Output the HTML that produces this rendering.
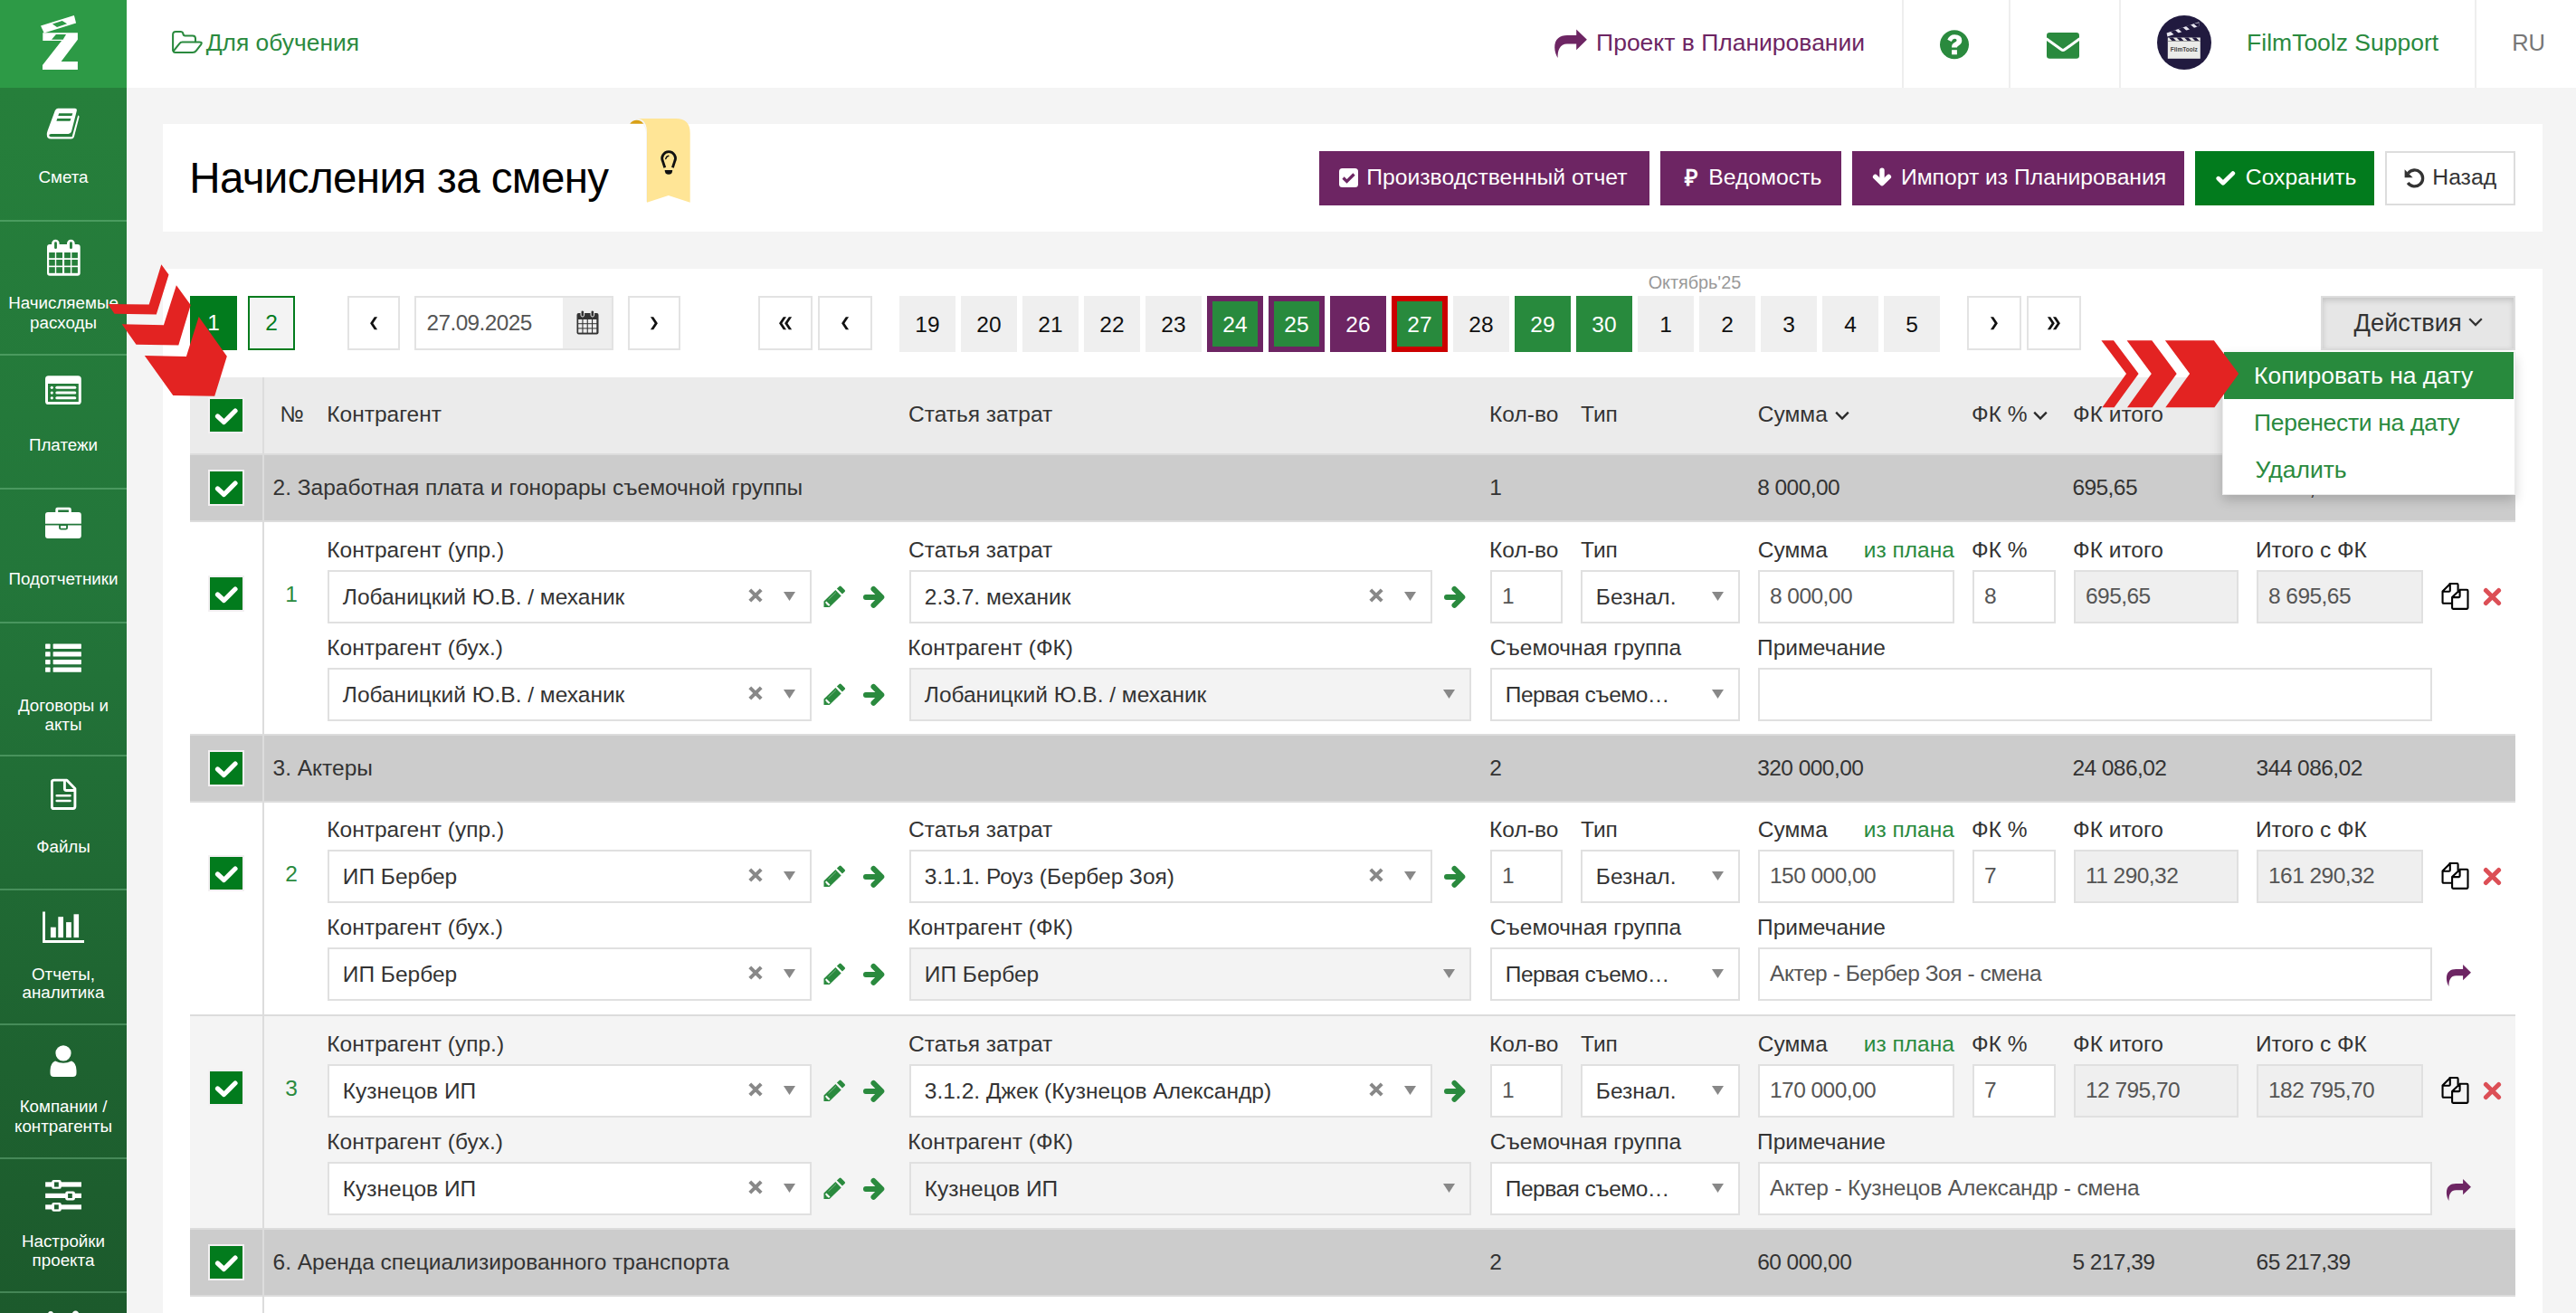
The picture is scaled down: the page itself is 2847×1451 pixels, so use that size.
<!DOCTYPE html>
<html><head><meta charset="utf-8"><title>Начисления за смену</title>
<style>
html,body{margin:0;padding:0;}
body{width:2847px;height:1451px;overflow:hidden;position:relative;background:#f4f4f4;font-family:"Liberation Sans", sans-serif;}
.t{position:absolute;white-space:nowrap;line-height:1;font-family:"Liberation Sans", sans-serif;}
.r{position:absolute;box-sizing:border-box;}
</style></head><body>

<div class="r" style="left:140px;top:0px;width:2707px;height:97px;background:#fff"></div>
<div class="r" style="left:2102px;top:0px;width:2px;height:97px;background:#eeeeee"></div>
<div class="r" style="left:2220px;top:0px;width:2px;height:97px;background:#eeeeee"></div>
<div class="r" style="left:2342px;top:0px;width:2px;height:97px;background:#eeeeee"></div>
<div class="r" style="left:2735px;top:0px;width:2px;height:97px;background:#eeeeee"></div>
<svg class="r" style="left:189px;top:33px;" width="36" height="27" viewBox="0 0 36 27"><g fill="none" stroke="#2a8a3e" stroke-width="2.05" stroke-linejoin="round" stroke-linecap="round"><path d="M2.1 23 V5.3 Q2.1 1.95 5.4 1.95 H10.6 Q12.8 1.95 13.3 4 Q13.7 6.4 15.5 6.4 H23.9 Q27 6.4 27 9.6 V13.3"/><path d="M4.8 24.9 H23.9 Q26.5 24.9 28 22.8 L33.4 15.8 Q34.8 13.4 31.1 13.4 H12.6 Q10.5 13.4 9.2 15.3 L3 23.2 Q2.1 24.9 4.8 24.9 Z"/></g></svg>
<div class="t" style="left:227.7px;top:34.1px;font-size:26.4px;color:#2a8a3e;">Для обучения</div>
<svg class="r" style="left:1717px;top:31px;" width="38" height="34" viewBox="0 0 38 34"><path d="M36.9 12.8 L25.2 1.4 V8.05 H15 C7 8.05 1.2 12 1.2 21.5 C1.2 26 3 30.5 4.65 33 C4.2 25 7 17.6 15 17.6 H25.2 V24.2 Z" fill="#6d2563"/></svg>
<div class="t" style="left:1764.1px;top:33.6px;font-size:26.5px;color:#6d2563;">Проект в Планировании</div>
<svg class="r" style="left:2144px;top:33px;" width="32" height="33" viewBox="0 0 32 33"><circle cx="16" cy="16.2" r="16" fill="#2a8a3e"/><path d="M8.3 10.8 Q10.5 5.2 16.2 5.2 Q24.3 5.2 24.3 11.8 Q24.3 15.4 20.6 17.4 Q18.9 18.4 18.9 19.6 H13.1 V18.6 Q13.1 15.4 16.5 13.8 Q18.6 12.8 18.6 11.5 Q18.6 9.8 16.3 9.8 Q14.2 9.8 12.6 12.9 Z" fill="#fff"/><rect x="13.1" y="22.2" width="5.8" height="5.1" fill="#fff"/></svg>
<svg class="r" style="left:2262px;top:36px;" width="36" height="29" viewBox="0 0 36 29"><rect x="0" y="0" width="36" height="28.7" rx="3.2" fill="#2a8a3e"/><path d="M-0.5 6.8 L16.2 18.8 Q18 20.1 19.8 18.8 L36.5 6.8" fill="none" stroke="#fff" stroke-width="3"/></svg>
<svg class="r" style="left:2384px;top:17px;" width="60" height="60" viewBox="0 0 60 60"><circle cx="30" cy="30" r="30" fill="#211a3f"/><path d="M10.6 19.4 L46.3 7.2 L47 11.8 L11.4 23.4 Z" fill="#e8e6f0"/><path d="M15 18 L19.5 22 L24.5 20.3 L20 16.3 Z M23.5 15 L28 19 L33 17.3 L28.5 13.3 Z M32 12 L36.5 16 L41.5 14.3 L37 10.3 Z M40.5 9.2 L44.5 12.8 L46.8 12 L46.5 8.2 Z" fill="#211a3f"/><rect x="11.8" y="24.5" width="36" height="23.3" fill="#ebebe9"/><path d="M13 24.5 L16.5 28 H21 L17.5 24.5 Z M21.5 24.5 L25 28 H29.5 L26 24.5 Z M30 24.5 L33.5 28 H38 L34.5 24.5 Z M38.5 24.5 L42 28 H46.5 L43 24.5 Z" fill="#211a3f"/><rect x="11.8" y="28" width="36" height="0.8" fill="#888"/><text x="29.8" y="40.3" font-size="7" font-family="Liberation Sans" font-weight="bold" text-anchor="middle" fill="#444" textLength="30" lengthAdjust="spacingAndGlyphs">FilmToolz</text></svg>
<div class="t" style="left:2483.1px;top:34.1px;font-size:26.5px;color:#2a8a3e;">FilmToolz Support</div>
<div class="t" style="left:2776.2px;top:34.9px;font-size:25.5px;color:#777777;">RU</div>
<div class="r" style="left:0px;top:0px;width:140px;height:97px;background:#2d9a46"></div>
<div class="r" style="left:0px;top:97px;width:140px;height:1354px;background:linear-gradient(180deg,#267f3b 0%,#23763a 40%,#1e6230 80%,#1c5a2c 100%)"></div>
<div class="r" style="left:0px;top:243px;width:140px;height:2px;background:rgba(140,210,160,0.36)"></div>
<div class="r" style="left:0px;top:391px;width:140px;height:2px;background:rgba(140,210,160,0.36)"></div>
<div class="r" style="left:0px;top:539px;width:140px;height:2px;background:rgba(140,210,160,0.36)"></div>
<div class="r" style="left:0px;top:687px;width:140px;height:2px;background:rgba(140,210,160,0.36)"></div>
<div class="r" style="left:0px;top:834px;width:140px;height:2px;background:rgba(140,210,160,0.36)"></div>
<div class="r" style="left:0px;top:982px;width:140px;height:2px;background:rgba(140,210,160,0.36)"></div>
<div class="r" style="left:0px;top:1131px;width:140px;height:2px;background:rgba(140,210,160,0.36)"></div>
<div class="r" style="left:0px;top:1279px;width:140px;height:2px;background:rgba(140,210,160,0.36)"></div>
<div class="r" style="left:0px;top:1427px;width:140px;height:2px;background:rgba(140,210,160,0.36)"></div>
<svg class="r" style="left:44px;top:15px;" width="46" height="64" viewBox="0 0 46 64"><path d="M1 13.6 L37.9 1.9 L40.1 10.4 L4.7 21.6 Z" fill="#fff"/><path d="M13.9 11.6 L24.7 7.9 L30.1 11.3 L19 15 Z" fill="#2d9a46"/><path d="M3.3 21.3 H41.9 V28.7 L23.6 53 H41.9 V61.9 H3 V57 L24.1 30.1 H3.3 Z" fill="#fff"/><path d="M13 28.7 L17.9 23 H29 L25.6 28.7 Z" fill="#2d9a46"/></svg>
<svg class="r" style="left:51px;top:119px;" width="38" height="36" viewBox="0 0 38 36"><path d="M13 0.7 H31.6 Q34.4 0.7 33.8 3.4 L28 26.3 Q27.3 29 24.6 29 H5.5 Q3.2 29 3.2 30.6 Q3.2 32.2 5.5 32.2 H28.6 L35.2 8.6 Q36.8 8.8 36.5 10.6 L30.9 32.2 Q30.2 34.6 27.6 34.6 H5.3 Q0.6 34.6 0.8 29.5 Q0.9 27.5 1.6 25.5 L9.8 3.2 Q10.8 0.7 13 0.7 Z" fill="#fff"/><path d="M14.2 6.2 H29.3 L28.4 8.9 H13.3 Z M12.3 12.1 H27.4 L26.5 14.8 H11.4 Z" fill="#267f3b"/></svg>
<div class="t" style="left:0;width:140px;text-align:center;top:186.9px;font-size:18.8px;color:#fff">Смета</div>
<svg class="r" style="left:52px;top:264px;" width="38" height="42" viewBox="0 0 38 42"><rect x="0" y="6.1" width="36.7" height="34.7" rx="3" fill="#fff"/><rect x="5.1" y="0.8" width="8.5" height="12" rx="4.25" fill="#fff"/><rect x="8.1" y="3.3" width="2.8" height="7.8" rx="1.4" fill="#267f3b"/><rect x="22" y="0.8" width="8.7" height="12" rx="4.3" fill="#fff"/><rect x="25" y="3.3" width="2.9" height="7.8" rx="1.4" fill="#267f3b"/><rect x="2.2" y="15" width="6.6" height="6.2" fill="#267f3b"/><rect x="2.2" y="23" width="6.6" height="6.6" fill="#267f3b"/><rect x="2.2" y="31.2" width="6.6" height="6.6" fill="#267f3b"/><rect x="10.2" y="15" width="6.8" height="6.2" fill="#267f3b"/><rect x="10.2" y="23" width="6.8" height="6.6" fill="#267f3b"/><rect x="10.2" y="31.2" width="6.8" height="6.6" fill="#267f3b"/><rect x="19.1" y="15" width="6.8" height="6.2" fill="#267f3b"/><rect x="19.1" y="23" width="6.8" height="6.6" fill="#267f3b"/><rect x="19.1" y="31.2" width="6.8" height="6.6" fill="#267f3b"/><rect x="27.3" y="15" width="6.6" height="6.2" fill="#267f3b"/><rect x="27.3" y="23" width="6.6" height="6.6" fill="#267f3b"/><rect x="27.3" y="31.2" width="6.6" height="6.6" fill="#267f3b"/></svg>
<div class="t" style="left:0;width:140px;text-align:center;top:325.8px;font-size:18.8px;color:#fff">Начисляемые</div>
<div class="t" style="left:0;width:140px;text-align:center;top:347.5px;font-size:18.8px;color:#fff">расходы</div>
<svg class="r" style="left:50px;top:415px;" width="40" height="32" viewBox="0 0 40 32"><rect x="0" y="0.3" width="39.8" height="31.7" rx="3.6" fill="#fff"/><rect x="3" y="9" width="33.8" height="20" fill="#257d3a"/><circle cx="7.3" cy="13.3" r="1.6" fill="#fff"/><rect x="11.3" y="11.8" width="23" height="3" rx="1.5" fill="#fff"/><circle cx="7.3" cy="19.05" r="1.6" fill="#fff"/><rect x="11.3" y="17.55" width="23" height="3" rx="1.5" fill="#fff"/><circle cx="7.3" cy="24.8" r="1.6" fill="#fff"/><rect x="11.3" y="23.3" width="23" height="3" rx="1.5" fill="#fff"/></svg>
<div class="t" style="left:0;width:140px;text-align:center;top:483.0px;font-size:18.8px;color:#fff">Платежи</div>
<svg class="r" style="left:50px;top:560px;" width="40" height="36" viewBox="0 0 40 36"><path d="M11.3 6.5 V3 Q11.3 0.7 13.6 0.7 H26.5 Q28.8 0.7 28.8 3 V6.5 H25.9 V3.5 H14.2 V6.5 Z" fill="#fff"/><path d="M0 9 Q0 6 3 6 H36.8 Q39.8 6 39.8 9 V18.8 H0 Z" fill="#fff"/><path d="M0 20.4 H15.1 V23.3 Q15.1 25.6 17.4 25.6 H22.7 Q25 25.6 25 23.3 V20.4 H39.8 V32 Q39.8 35 36.8 35 H3 Q0 35 0 32 Z" fill="#fff"/><rect x="17" y="21.1" width="6.1" height="2.7" fill="#fff"/></svg>
<div class="t" style="left:0;width:140px;text-align:center;top:631.4px;font-size:18.8px;color:#fff">Подотчетники</div>
<svg class="r" style="left:50px;top:711px;" width="41" height="33" viewBox="0 0 41 33"><rect x="0.1" y="0.60" width="5.5" height="5.3" rx="0.6" fill="#fff"/><rect x="8.65" y="0.60" width="31.2" height="5.3" rx="0.6" fill="#fff"/><rect x="0.1" y="9.25" width="5.5" height="5.3" rx="0.6" fill="#fff"/><rect x="8.65" y="9.25" width="31.2" height="5.3" rx="0.6" fill="#fff"/><rect x="0.1" y="17.90" width="5.5" height="5.3" rx="0.6" fill="#fff"/><rect x="8.65" y="17.90" width="31.2" height="5.3" rx="0.6" fill="#fff"/><rect x="0.1" y="26.55" width="5.5" height="5.3" rx="0.6" fill="#fff"/><rect x="8.65" y="26.55" width="31.2" height="5.3" rx="0.6" fill="#fff"/></svg>
<div class="t" style="left:0;width:140px;text-align:center;top:771.4px;font-size:18.8px;color:#fff">Договоры и</div>
<div class="t" style="left:0;width:140px;text-align:center;top:792.4px;font-size:18.8px;color:#fff">акты</div>
<svg class="r" style="left:56px;top:860px;" width="29" height="36" viewBox="0 0 29 36"><g fill="none" stroke="#fff" stroke-width="2.9" stroke-linejoin="round"><path d="M3.5 2.14 H17.9 L26.9 11.4 V31.3 Q26.9 33.5 24.7 33.5 H3.5 Q1.35 33.5 1.35 31.3 V4.3 Q1.35 2.14 3.5 2.14 Z"/><path d="M15.4 2.5 V11.5 Q15.4 13.5 17.4 13.5 H26.5"/><path d="M6.7 19.3 H21.5 M6.7 25 H21.5" stroke-width="2.5" stroke-linecap="round"/></g></svg>
<div class="t" style="left:0;width:140px;text-align:center;top:927.1px;font-size:18.8px;color:#fff">Файлы</div>
<svg class="r" style="left:47px;top:1006px;" width="47" height="37" viewBox="0 0 47 37"><path d="M0.1 1.4 H3 V33 H46 V35.9 H0.1 Z" fill="#fff"/><rect x="8.9" y="18.7" width="5.9" height="11.4" fill="#fff"/><rect x="17.3" y="7.2" width="5.7" height="22.9" fill="#fff"/><rect x="26.1" y="13.1" width="5.7" height="17" fill="#fff"/><rect x="34.5" y="4.3" width="5.6" height="25.8" fill="#fff"/></svg>
<div class="t" style="left:0;width:140px;text-align:center;top:1067.7px;font-size:18.8px;color:#fff">Отчеты,</div>
<div class="t" style="left:0;width:140px;text-align:center;top:1087.8px;font-size:18.8px;color:#fff">аналитика</div>
<svg class="r" style="left:55px;top:1154px;" width="30" height="36" viewBox="0 0 30 36"><ellipse cx="15" cy="9.8" rx="8.6" ry="8.6" fill="#fff"/><path d="M6 18.5 Q15 23 24 18.5 Q29.5 21 29.5 29 V32 Q29.5 36 25.5 36 H4.5 Q0.5 36 0.5 32 V29 Q0.5 21 6 18.5 Z" fill="#fff"/></svg>
<div class="t" style="left:0;width:140px;text-align:center;top:1214.1px;font-size:18.8px;color:#fff">Компании /</div>
<div class="t" style="left:0;width:140px;text-align:center;top:1236.1px;font-size:18.8px;color:#fff">контрагенты</div>
<svg class="r" style="left:50px;top:1303px;" width="41" height="37" viewBox="0 0 41 37"><rect x="0.14" y="3.3" width="39.8" height="5.3" fill="#fff"/><rect x="0.14" y="15.8" width="39.8" height="5.2" fill="#fff"/><rect x="0.14" y="28.3" width="39.8" height="5.2" fill="#fff"/><rect x="7.2" y="0.95" width="10.6" height="9.9" rx="2.2" fill="#fff"/><rect x="10" y="3.4" width="4.8" height="5.2" fill="#1d5f2e"/><rect x="22.2" y="13.5" width="10.7" height="9.9" rx="2.2" fill="#fff"/><rect x="25.1" y="16" width="4.7" height="5" fill="#1d5f2e"/><rect x="7.2" y="25.9" width="10.6" height="9.9" rx="2.2" fill="#fff"/><rect x="10" y="28.3" width="4.8" height="5.1" fill="#1d5f2e"/></svg>
<div class="t" style="left:0;width:140px;text-align:center;top:1363.3px;font-size:18.8px;color:#fff">Настройки</div>
<div class="t" style="left:0;width:140px;text-align:center;top:1384.3px;font-size:18.8px;color:#fff">проекта</div>
<svg class="r" style="left:48px;top:1446px;" width="44" height="8" viewBox="0 0 44 8"><ellipse cx="8" cy="7" rx="3.2" ry="4" fill="#fff"/><ellipse cx="35.5" cy="7" rx="3.8" ry="4.5" fill="#fff"/></svg>
<div class="r" style="left:180px;top:137px;width:2630px;height:119px;background:#fff"></div>
<div class="t" style="left:209.2px;top:173.2px;font-size:47.5px;color:#000000;letter-spacing:-0.6px;">Начисления за смену</div>
<svg class="r" style="left:694px;top:130px;" width="72" height="96" viewBox="0 0 72 96"><path d="M2.2 6.8 Q5 2.7 9.6 2.7 Q14.5 2.7 17.2 6.8 Z" fill="#d9a015"/><path d="M9.6 0.95 H53 Q68.7 0.95 68.7 17 V93.8 L44.8 85.9 L21 93.8 V17 Q21 0.95 9.6 0.95 Z" fill="#ffe596"/><path d="M17.2 7 Q20 10 20.6 17 V93" fill="none" stroke="rgba(0,0,0,0.04)" stroke-width="1.2"/><g fill="none" stroke="#111" stroke-width="2.8"><path d="M40.8 55.3 L38.6 48.5 A7.35 7.35 0 1 1 51.6 48.5 L49.4 55.3"/><path d="M41.8 45.4 Q42.3 42.8 44.8 42.2" stroke-width="1.6" stroke-linecap="round"/></g><path d="M40.7 57.9 H49.2 Q49.2 62.8 45 62.8 Q40.7 62.8 40.7 57.9 Z" fill="#111"/></svg>
<div class="r" style="left:1458px;top:167px;width:365px;height:60px;background:#6d2563;"></div>
<div class="t" style="left:1510.3px;top:184.1px;font-size:24.7px;color:#fff;">Производственный отчет</div>
<svg class="r" style="left:1480px;top:186px" width="21" height="21" viewBox="0 0 21 21"><rect x="0" y="0" width="21" height="21" rx="3.5" fill="#fff"/><path d="M4.5 10.5 L8.5 14.5 L16.5 6.5" fill="none" stroke="#6d2563" stroke-width="3.2"/></svg>
<div class="r" style="left:1835px;top:167px;width:200px;height:60px;background:#6d2563;"></div>
<div class="t" style="left:1888.3px;top:184.1px;font-size:24.7px;color:#fff;">Ведомость</div>
<div class="t" style="left:1862px;top:184px;font-size:25px;color:#fff;font-weight:bold">&#8381;</div>
<div class="r" style="left:2047px;top:167px;width:367px;height:60px;background:#6d2563;"></div>
<div class="t" style="left:2100.9px;top:184.1px;font-size:24.7px;color:#fff;">Импорт из Планирования</div>
<svg class="r" style="left:2069px;top:185px" width="22" height="22" viewBox="0 0 22 22"><path d="M11 3.2 V15" stroke="#fff" stroke-width="5.4" stroke-linecap="round"/><path d="M3.6 10.4 L11 17.6 L18.4 10.4" fill="none" stroke="#fff" stroke-width="5.4" stroke-linecap="round" stroke-linejoin="round"/></svg>
<div class="r" style="left:2426px;top:167px;width:198px;height:60px;background:#027b1d;"></div>
<div class="t" style="left:2481.8px;top:184.1px;font-size:24.7px;color:#fff;">Сохранить</div>
<svg class="r" style="left:2449px;top:188px" width="22" height="18" viewBox="0 0 22 18"><path d="M2.8 9.2 L7.9 14.2 L18.8 3.6" fill="none" stroke="#fff" stroke-width="4.8" stroke-linecap="round" stroke-linejoin="round"/></svg>
<div class="r" style="left:2636px;top:167px;width:144px;height:60px;background:#fff;border:2px solid #dddddd;"></div>
<div class="t" style="left:2688.3px;top:184.1px;font-size:24.7px;color:#333;">Назад</div>
<svg class="r" style="left:2656px;top:185px" width="24" height="24" viewBox="0 0 24 24"><path d="M5.5 6.5 A9 9 0 1 1 5.2 17" fill="none" stroke="#333" stroke-width="3.3"/><path d="M1.6 2.2 V11.2 H10.6 Z" fill="#333"/></svg>
<div class="r" style="left:180px;top:297px;width:2630px;height:1154px;background:#fff"></div>
<div class="r" style="left:210px;top:327px;width:52px;height:60px;background:#027b1d"></div>
<div class="t" style="left:210px;width:52px;text-align:center;top:345.3px;font-size:24.5px;color:#fff">1</div>
<div class="r" style="left:274px;top:327px;width:52px;height:60px;background:#f3f3f3;border:2px solid #027b1d"></div>
<div class="t" style="left:274px;width:52px;text-align:center;top:345.3px;font-size:24.5px;color:#027b1d">2</div>
<div class="r" style="left:384px;top:327px;width:58px;height:60px;background:#fff;border:2px solid #e3e3e3"></div>
<svg class="r" style="left:0;top:0" width="2847" height="400" viewBox="0 0 2847 400"><polygon points="413.80,350.3 417.10,350.3 412.40,357.15 417.10,364.2 413.80,364.2 409.10,357.15" fill="#111"/></svg>
<div class="r" style="left:458px;top:327px;width:220px;height:60px;background:#fff;border:2px solid #e3e3e3"></div>
<div class="r" style="left:622px;top:329px;width:54px;height:56px;background:#eeeeee"></div>
<div class="t" style="left:471.5px;top:345.4px;font-size:24.3px;color:#555555;letter-spacing:-0.55px;">27.09.2025</div>
<svg class="r" style="left:637px;top:343px;" width="25" height="27" viewBox="0 0 25 27"><rect x="0.5" y="3" width="24" height="23.5" rx="2" fill="#333"/><rect x="5" y="0" width="3.6" height="7" rx="1.8" fill="#333" stroke="#eee" stroke-width="1"/><rect x="16" y="0" width="3.6" height="7" rx="1.8" fill="#333" stroke="#eee" stroke-width="1"/><rect x="2.2" y="10.0" width="4.2" height="4.2" fill="#eee"/><rect x="7.5" y="10.0" width="4.2" height="4.2" fill="#eee"/><rect x="12.8" y="10.0" width="4.2" height="4.2" fill="#eee"/><rect x="18.099999999999998" y="10.0" width="4.2" height="4.2" fill="#eee"/><rect x="2.2" y="15.2" width="4.2" height="4.2" fill="#eee"/><rect x="7.5" y="15.2" width="4.2" height="4.2" fill="#eee"/><rect x="12.8" y="15.2" width="4.2" height="4.2" fill="#eee"/><rect x="18.099999999999998" y="15.2" width="4.2" height="4.2" fill="#eee"/><rect x="2.2" y="20.4" width="4.2" height="4.2" fill="#eee"/><rect x="7.5" y="20.4" width="4.2" height="4.2" fill="#eee"/><rect x="12.8" y="20.4" width="4.2" height="4.2" fill="#eee"/><rect x="18.099999999999998" y="20.4" width="4.2" height="4.2" fill="#eee"/></svg>
<div class="r" style="left:694px;top:327px;width:58px;height:60px;background:#fff;border:2px solid #e3e3e3"></div>
<svg class="r" style="left:0;top:0" width="2847" height="400" viewBox="0 0 2847 400"><polygon points="722.20,350.3 718.90,350.3 723.60,357.15 718.90,364.2 722.20,364.2 726.90,357.15" fill="#111"/></svg>
<div class="r" style="left:838px;top:327px;width:60px;height:60px;background:#fff;border:2px solid #e3e3e3"></div>
<svg class="r" style="left:0;top:0" width="2847" height="400" viewBox="0 0 2847 400"><polygon points="865.75,350.3 869.05,350.3 864.35,357.15 869.05,364.2 865.75,364.2 861.05,357.15" fill="#111"/><polygon points="871.85,350.3 875.15,350.3 870.45,357.15 875.15,364.2 871.85,364.2 867.15,357.15" fill="#111"/></svg>
<div class="r" style="left:904px;top:327px;width:60px;height:60px;background:#fff;border:2px solid #e3e3e3"></div>
<svg class="r" style="left:0;top:0" width="2847" height="400" viewBox="0 0 2847 400"><polygon points="934.80,350.3 938.10,350.3 933.40,357.15 938.10,364.2 934.80,364.2 930.10,357.15" fill="#111"/></svg>
<div class="r" style="left:994px;top:327px;width:62px;height:62px;background:#efefef"></div>
<div class="t" style="left:994px;width:62px;text-align:center;top:347.3px;font-size:24.5px;color:#111">19</div>
<div class="r" style="left:1062px;top:327px;width:62px;height:62px;background:#efefef"></div>
<div class="t" style="left:1062px;width:62px;text-align:center;top:347.3px;font-size:24.5px;color:#111">20</div>
<div class="r" style="left:1130px;top:327px;width:62px;height:62px;background:#efefef"></div>
<div class="t" style="left:1130px;width:62px;text-align:center;top:347.3px;font-size:24.5px;color:#111">21</div>
<div class="r" style="left:1198px;top:327px;width:62px;height:62px;background:#efefef"></div>
<div class="t" style="left:1198px;width:62px;text-align:center;top:347.3px;font-size:24.5px;color:#111">22</div>
<div class="r" style="left:1266px;top:327px;width:62px;height:62px;background:#efefef"></div>
<div class="t" style="left:1266px;width:62px;text-align:center;top:347.3px;font-size:24.5px;color:#111">23</div>
<div class="r" style="left:1334px;top:327px;width:62px;height:62px;background:#288a3d;border:6px solid #6d2563"></div>
<div class="t" style="left:1334px;width:62px;text-align:center;top:347.3px;font-size:24.5px;color:#fff">24</div>
<div class="r" style="left:1402px;top:327px;width:62px;height:62px;background:#288a3d;border:6px solid #6d2563"></div>
<div class="t" style="left:1402px;width:62px;text-align:center;top:347.3px;font-size:24.5px;color:#fff">25</div>
<div class="r" style="left:1470px;top:327px;width:62px;height:62px;background:#6d2563"></div>
<div class="t" style="left:1470px;width:62px;text-align:center;top:347.3px;font-size:24.5px;color:#fff">26</div>
<div class="r" style="left:1538px;top:327px;width:62px;height:62px;background:#288a3d;border:6px solid #cc0000"></div>
<div class="t" style="left:1538px;width:62px;text-align:center;top:347.3px;font-size:24.5px;color:#fff">27</div>
<div class="r" style="left:1606px;top:327px;width:62px;height:62px;background:#efefef"></div>
<div class="t" style="left:1606px;width:62px;text-align:center;top:347.3px;font-size:24.5px;color:#111">28</div>
<div class="r" style="left:1674px;top:327px;width:62px;height:62px;background:#288a3d"></div>
<div class="t" style="left:1674px;width:62px;text-align:center;top:347.3px;font-size:24.5px;color:#fff">29</div>
<div class="r" style="left:1742px;top:327px;width:62px;height:62px;background:#288a3d"></div>
<div class="t" style="left:1742px;width:62px;text-align:center;top:347.3px;font-size:24.5px;color:#fff">30</div>
<div class="r" style="left:1810px;top:327px;width:62px;height:62px;background:#efefef"></div>
<div class="t" style="left:1810px;width:62px;text-align:center;top:347.3px;font-size:24.5px;color:#111">1</div>
<div class="r" style="left:1878px;top:327px;width:62px;height:62px;background:#efefef"></div>
<div class="t" style="left:1878px;width:62px;text-align:center;top:347.3px;font-size:24.5px;color:#111">2</div>
<div class="r" style="left:1946px;top:327px;width:62px;height:62px;background:#efefef"></div>
<div class="t" style="left:1946px;width:62px;text-align:center;top:347.3px;font-size:24.5px;color:#111">3</div>
<div class="r" style="left:2014px;top:327px;width:62px;height:62px;background:#efefef"></div>
<div class="t" style="left:2014px;width:62px;text-align:center;top:347.3px;font-size:24.5px;color:#111">4</div>
<div class="r" style="left:2082px;top:327px;width:62px;height:62px;background:#efefef"></div>
<div class="t" style="left:2082px;width:62px;text-align:center;top:347.3px;font-size:24.5px;color:#111">5</div>
<div class="t" style="left:1821.7px;top:303.2px;font-size:19.8px;color:#999999;">Октябрь'25</div>
<div class="r" style="left:2174px;top:327px;width:60px;height:60px;background:#fff;border:2px solid #e3e3e3"></div>
<svg class="r" style="left:0;top:0" width="2847" height="400" viewBox="0 0 2847 400"><polygon points="2203.20,350.3 2199.90,350.3 2204.60,357.15 2199.90,364.2 2203.20,364.2 2207.90,357.15" fill="#111"/></svg>
<div class="r" style="left:2240px;top:327px;width:60px;height:60px;background:#fff;border:2px solid #e3e3e3"></div>
<svg class="r" style="left:0;top:0" width="2847" height="400" viewBox="0 0 2847 400"><polygon points="2272.25,350.3 2268.95,350.3 2273.65,357.15 2268.95,364.2 2272.25,364.2 2276.95,357.15" fill="#111"/><polygon points="2266.15,350.3 2262.85,350.3 2267.55,357.15 2262.85,364.2 2266.15,364.2 2270.85,357.15" fill="#111"/></svg>
<div class="r" style="left:2565px;top:327px;width:215px;height:60px;background:#e6e6e6;border:2px solid #dddddd;box-shadow:inset 0 3px 6px rgba(0,0,0,0.15)"></div>
<div class="t" style="left:2601.6px;top:343.0px;font-size:27.2px;color:#333;">Действия</div>
<svg class="r" style="left:2728px;top:351px;" width="16" height="10" viewBox="0 0 16 10"><path d="M1.2 1.2 L8 8 L14.8 1.2" fill="none" stroke="#333" stroke-width="2.3"/></svg>
<div class="r" style="left:210px;top:417px;width:2570px;height:85px;background:#ebebeb"></div>
<div class="r" style="left:230px;top:439px;width:40px;height:40px;background:#f3f0f2"></div>
<div class="r" style="left:232px;top:441px;width:36px;height:36px;background:#027b1d"></div>
<svg class="r" style="left:232px;top:441px" width="36" height="36" viewBox="0 0 36 36"><path d="M8.5 19 L15.5 25.5 L28 13" fill="none" stroke="#fff" stroke-width="5.2" stroke-linecap="round" stroke-linejoin="round"/></svg>
<div class="t" style="left:309.5px;top:446.3px;font-size:24.5px;color:#333333;">№</div>
<div class="t" style="left:361.3px;top:446.3px;font-size:24.5px;color:#333333;">Контрагент</div>
<div class="t" style="left:1004.0px;top:446.3px;font-size:24.5px;color:#333333;">Статья затрат</div>
<div class="t" style="left:1646.1px;top:446.3px;font-size:24.5px;color:#333333;">Кол-во</div>
<div class="t" style="left:1747.0px;top:446.3px;font-size:24.5px;color:#333333;">Тип</div>
<div class="t" style="left:1942.8px;top:446.3px;font-size:24.5px;color:#333333;">Сумма</div>
<svg class="r" style="left:2028px;top:454px;" width="16" height="11" viewBox="0 0 16 11"><path d="M1.2 1.6 L8 8.6 L14.8 1.6" fill="none" stroke="#2a2a2a" stroke-width="2.3"/></svg>
<div class="t" style="left:2179.0px;top:446.3px;font-size:24.5px;color:#333333;">ФК %</div>
<svg class="r" style="left:2246.5px;top:454px;" width="16" height="11" viewBox="0 0 16 11"><path d="M1.2 1.6 L8 8.6 L14.8 1.6" fill="none" stroke="#2a2a2a" stroke-width="2.3"/></svg>
<div class="t" style="left:2291.0px;top:446.3px;font-size:24.5px;color:#333333;">ФК итого</div>
<div class="t" style="left:2492.9px;top:446.3px;font-size:24.5px;color:#333333;">Итого с ФК</div>
<div class="r" style="left:290px;top:417px;width:2px;height:1034px;background:#dcdcdc"></div>
<div class="r" style="left:210px;top:501px;width:2570px;height:2px;background:#dcdcdc"></div>
<div class="r" style="left:210px;top:503px;width:2570px;height:72px;background:#cccccc"></div>
<div class="r" style="left:210px;top:575px;width:2570px;height:2px;background:#dcdcdc"></div>
<div class="r" style="left:290px;top:502px;width:2px;height:74px;background:#dcdcdc"></div>
<div class="r" style="left:230px;top:519px;width:40px;height:40px;background:#f3f0f2"></div>
<div class="r" style="left:232px;top:521px;width:36px;height:36px;background:#027b1d"></div>
<svg class="r" style="left:232px;top:521px" width="36" height="36" viewBox="0 0 36 36"><path d="M8.5 19 L15.5 25.5 L28 13" fill="none" stroke="#fff" stroke-width="5.2" stroke-linecap="round" stroke-linejoin="round"/></svg>
<div class="t" style="left:301.5px;top:527.3px;font-size:24.5px;color:#333333;">2. Заработная плата и гонорары съемочной группы</div>
<div class="t" style="left:1646.3px;top:527.3px;font-size:24.5px;color:#333333;">1</div>
<div class="t" style="left:1942.2px;top:527.3px;font-size:24.5px;color:#333333;letter-spacing:-0.55px;">8 000,00</div>
<div class="t" style="left:2290.4px;top:527.3px;font-size:24.5px;color:#333333;letter-spacing:-0.55px;">695,65</div>
<div class="t" style="left:2493.6px;top:527.3px;font-size:24.5px;color:#333333;letter-spacing:-0.55px;">8 695,65</div>
<div class="r" style="left:230px;top:636px;width:40px;height:40px;background:#f3f0f2"></div>
<div class="r" style="left:232px;top:638px;width:36px;height:36px;background:#027b1d"></div>
<svg class="r" style="left:232px;top:638px" width="36" height="36" viewBox="0 0 36 36"><path d="M8.5 19 L15.5 25.5 L28 13" fill="none" stroke="#fff" stroke-width="5.2" stroke-linecap="round" stroke-linejoin="round"/></svg>
<div class="t" style="left:315.3px;top:645.3px;font-size:24.5px;color:#2a8a3e;">1</div>
<div class="t" style="left:361.3px;top:595.8px;font-size:24.5px;color:#333333;">Контрагент (упр.)</div>
<div class="t" style="left:361.3px;top:703.8px;font-size:24.5px;color:#333333;">Контрагент (бух.)</div>
<div class="r" style="left:362px;top:629.5px;width:535px;height:59.0px;background:#fff;border:2px solid #e0e0e0"></div>
<div class="t" style="left:378.8px;top:648.3px;font-size:24.5px;color:#333333;">Лобаницкий Ю.В. / механик</div>
<svg class="r" style="left:827px;top:650.0px" width="16" height="16" viewBox="0 0 16 16"><path d="M1.8 1.8 L14.2 14.2 M14.2 1.8 L1.8 14.2" stroke="#888" stroke-width="4"/></svg>
<svg class="r" style="left:865.5px;top:654.0px" width="13" height="10" viewBox="0 0 13 10"><path d="M0 0 H13 L6.5 10 Z" fill="#888"/></svg>
<div class="r" style="left:362px;top:737.5px;width:535px;height:59.0px;background:#fff;border:2px solid #e0e0e0"></div>
<div class="t" style="left:378.8px;top:756.3px;font-size:24.5px;color:#333333;">Лобаницкий Ю.В. / механик</div>
<svg class="r" style="left:827px;top:758.0px" width="16" height="16" viewBox="0 0 16 16"><path d="M1.8 1.8 L14.2 14.2 M14.2 1.8 L1.8 14.2" stroke="#888" stroke-width="4"/></svg>
<svg class="r" style="left:865.5px;top:762.0px" width="13" height="10" viewBox="0 0 13 10"><path d="M0 0 H13 L6.5 10 Z" fill="#888"/></svg>
<svg class="r" style="left:909px;top:646.0px" width="26" height="26" viewBox="0 0 26 26"><path d="M14.4 6.1 L20.7 12.4 L7.8 24.9 H1.5 V18.5 Z" fill="#2a8a3e"/><path d="M15.9 4.6 L18.6 1.9 Q19.6 0.9 20.6 1.9 L24.6 5.9 Q25.6 6.9 24.6 7.9 L21.9 10.6 Z" fill="#2a8a3e"/><path d="M3.3 19.3 L4.4 18.4 L8.5 22.5 L7.5 23.4 L6.2 23.4 L5.6 22.4 L4.4 22.3 V21.1 L3.3 20.6 Z" fill="#fff"/><path d="M6.6 16.6 L15 8.4" stroke="rgba(255,255,255,0.45)" stroke-width="0.8"/></svg>
<svg class="r" style="left:954px;top:647.2px" width="26" height="26" viewBox="0 0 26 26"><path d="M2.9 13 H17" stroke="#2a8a3e" stroke-width="5.8" stroke-linecap="round"/><path d="M11.4 3.9 L20.4 12.9 L11.4 21.9" fill="none" stroke="#2a8a3e" stroke-width="5.8" stroke-linecap="round" stroke-linejoin="round"/></svg>
<svg class="r" style="left:909px;top:754.0px" width="26" height="26" viewBox="0 0 26 26"><path d="M14.4 6.1 L20.7 12.4 L7.8 24.9 H1.5 V18.5 Z" fill="#2a8a3e"/><path d="M15.9 4.6 L18.6 1.9 Q19.6 0.9 20.6 1.9 L24.6 5.9 Q25.6 6.9 24.6 7.9 L21.9 10.6 Z" fill="#2a8a3e"/><path d="M3.3 19.3 L4.4 18.4 L8.5 22.5 L7.5 23.4 L6.2 23.4 L5.6 22.4 L4.4 22.3 V21.1 L3.3 20.6 Z" fill="#fff"/><path d="M6.6 16.6 L15 8.4" stroke="rgba(255,255,255,0.45)" stroke-width="0.8"/></svg>
<svg class="r" style="left:954px;top:755.2px" width="26" height="26" viewBox="0 0 26 26"><path d="M2.9 13 H17" stroke="#2a8a3e" stroke-width="5.8" stroke-linecap="round"/><path d="M11.4 3.9 L20.4 12.9 L11.4 21.9" fill="none" stroke="#2a8a3e" stroke-width="5.8" stroke-linecap="round" stroke-linejoin="round"/></svg>
<div class="t" style="left:1004.0px;top:595.8px;font-size:24.5px;color:#333333;">Статья затрат</div>
<div class="t" style="left:1003.3px;top:703.8px;font-size:24.5px;color:#333333;">Контрагент (ФК)</div>
<div class="r" style="left:1005px;top:629.5px;width:578px;height:59.0px;background:#fff;border:2px solid #e0e0e0"></div>
<div class="t" style="left:1021.8px;top:648.3px;font-size:24.5px;color:#333333;">2.3.7. механик</div>
<svg class="r" style="left:1513px;top:650.0px" width="16" height="16" viewBox="0 0 16 16"><path d="M1.8 1.8 L14.2 14.2 M14.2 1.8 L1.8 14.2" stroke="#888" stroke-width="4"/></svg>
<svg class="r" style="left:1551.5px;top:654.0px" width="13" height="10" viewBox="0 0 13 10"><path d="M0 0 H13 L6.5 10 Z" fill="#888"/></svg>
<svg class="r" style="left:1596px;top:647.2px" width="26" height="26" viewBox="0 0 26 26"><path d="M2.9 13 H17" stroke="#2a8a3e" stroke-width="5.8" stroke-linecap="round"/><path d="M11.4 3.9 L20.4 12.9 L11.4 21.9" fill="none" stroke="#2a8a3e" stroke-width="5.8" stroke-linecap="round" stroke-linejoin="round"/></svg>
<div class="r" style="left:1005px;top:737.5px;width:621px;height:59.0px;background:#f3f3f3;border:2px solid #e0e0e0"></div>
<div class="t" style="left:1021.8px;top:756.3px;font-size:24.5px;color:#333333;">Лобаницкий Ю.В. / механик</div>
<svg class="r" style="left:1594.5px;top:762.0px" width="13" height="10" viewBox="0 0 13 10"><path d="M0 0 H13 L6.5 10 Z" fill="#888"/></svg>
<div class="t" style="left:1646.1px;top:595.8px;font-size:24.5px;color:#333333;">Кол-во</div>
<div class="t" style="left:1747.0px;top:595.8px;font-size:24.5px;color:#333333;">Тип</div>
<div class="t" style="left:1942.8px;top:595.8px;font-size:24.5px;color:#333333;">Сумма</div>
<div class="t" style="left:2059.8px;top:595.8px;font-size:24.5px;color:#2a8a3e;">из плана</div>
<div class="t" style="left:2179.0px;top:595.8px;font-size:24.5px;color:#333333;">ФК %</div>
<div class="t" style="left:2291.0px;top:595.8px;font-size:24.5px;color:#333333;">ФК итого</div>
<div class="t" style="left:2492.9px;top:595.8px;font-size:24.5px;color:#333333;">Итого с ФК</div>
<div class="r" style="left:1647px;top:629.5px;width:80px;height:59.0px;background:#fff;border:2px solid #e0e0e0"></div>
<div class="t" style="left:1660.0px;top:646.8px;font-size:24.5px;color:#555555;">1</div>
<div class="r" style="left:1747px;top:629.5px;width:176px;height:59.0px;background:#fff;border:2px solid #e0e0e0"></div>
<div class="t" style="left:1763.8px;top:648.3px;font-size:24.5px;color:#333333;">Безнал.</div>
<svg class="r" style="left:1891.5px;top:654.0px" width="13" height="10" viewBox="0 0 13 10"><path d="M0 0 H13 L6.5 10 Z" fill="#888"/></svg>
<div class="r" style="left:1943px;top:629.5px;width:217px;height:59.0px;background:#fff;border:2px solid #e0e0e0"></div>
<div class="t" style="left:1956.0px;top:646.8px;font-size:24.5px;color:#555555;letter-spacing:-0.55px;">8 000,00</div>
<div class="r" style="left:2180px;top:629.5px;width:92px;height:59.0px;background:#fff;border:2px solid #e0e0e0"></div>
<div class="t" style="left:2193.0px;top:646.8px;font-size:24.5px;color:#555555;">8</div>
<div class="r" style="left:2292px;top:629.5px;width:182px;height:59.0px;background:#efefef;border:2px solid #e0e0e0"></div>
<div class="t" style="left:2305.0px;top:646.8px;font-size:24.5px;color:#555555;letter-spacing:-0.55px;">695,65</div>
<div class="r" style="left:2494px;top:629.5px;width:184px;height:59.0px;background:#efefef;border:2px solid #e0e0e0"></div>
<div class="t" style="left:2507.0px;top:646.8px;font-size:24.5px;color:#555555;letter-spacing:-0.55px;">8 695,65</div>
<svg class="r" style="left:2697px;top:642.7px" width="33" height="33" viewBox="0 0 33 33"><g fill="none" stroke="#000" stroke-width="2.1" stroke-linejoin="round" stroke-linecap="round"><path d="M10.6 2.05 H18.5 Q19.6 2.05 19.6 3.2 V9.6"/><path d="M12.9 23.7 H3.7 Q2.55 23.7 2.55 22.5 V10.6 L10.8 2.2 V9.7 Q10.8 10.8 9.7 10.8 H2.7"/><path d="M21.7 8.75 H29.4 Q30.5 8.75 30.5 9.9 V28.8 Q30.5 29.9 29.4 29.9 H14.2 Q13.1 29.9 13.1 28.8 V17.1 L21.6 8.9 V16 Q21.6 17.1 20.5 17.1 H13.2"/></g></svg>
<svg class="r" style="left:2744px;top:649.0px" width="21" height="21" viewBox="0 0 21 21"><path d="M3.4 3.4 L17.6 17.6 M17.6 3.4 L3.4 17.6" stroke="#dc4f56" stroke-width="5" stroke-linecap="round"/></svg>
<div class="t" style="left:1646.8px;top:703.8px;font-size:24.5px;color:#333333;">Съемочная группа</div>
<div class="t" style="left:1942.1px;top:703.8px;font-size:24.5px;color:#333333;">Примечание</div>
<div class="r" style="left:1647px;top:737.5px;width:276px;height:59.0px;background:#fff;border:2px solid #e0e0e0"></div>
<div class="t" style="left:1663.8px;top:756.3px;font-size:24.5px;color:#333333;letter-spacing:-0.5px;">Первая съемо…</div>
<svg class="r" style="left:1891.5px;top:762.0px" width="13" height="10" viewBox="0 0 13 10"><path d="M0 0 H13 L6.5 10 Z" fill="#888"/></svg>
<div class="r" style="left:1943px;top:737.5px;width:745px;height:59.0px;background:#fff;border:2px solid #e0e0e0"></div>
<div class="r" style="left:210px;top:811px;width:2570px;height:2px;background:#dcdcdc"></div>
<div class="r" style="left:210px;top:813px;width:2570px;height:72px;background:#cccccc"></div>
<div class="r" style="left:210px;top:885px;width:2570px;height:2px;background:#dcdcdc"></div>
<div class="r" style="left:290px;top:812px;width:2px;height:74px;background:#dcdcdc"></div>
<div class="r" style="left:230px;top:829px;width:40px;height:40px;background:#f3f0f2"></div>
<div class="r" style="left:232px;top:831px;width:36px;height:36px;background:#027b1d"></div>
<svg class="r" style="left:232px;top:831px" width="36" height="36" viewBox="0 0 36 36"><path d="M8.5 19 L15.5 25.5 L28 13" fill="none" stroke="#fff" stroke-width="5.2" stroke-linecap="round" stroke-linejoin="round"/></svg>
<div class="t" style="left:301.5px;top:837.3px;font-size:24.5px;color:#333333;">3. Актеры</div>
<div class="t" style="left:1646.3px;top:837.3px;font-size:24.5px;color:#333333;">2</div>
<div class="t" style="left:1942.2px;top:837.3px;font-size:24.5px;color:#333333;letter-spacing:-0.55px;">320 000,00</div>
<div class="t" style="left:2290.4px;top:837.3px;font-size:24.5px;color:#333333;letter-spacing:-0.55px;">24 086,02</div>
<div class="t" style="left:2493.6px;top:837.3px;font-size:24.5px;color:#333333;letter-spacing:-0.55px;">344 086,02</div>
<div class="r" style="left:230px;top:945px;width:40px;height:40px;background:#f3f0f2"></div>
<div class="r" style="left:232px;top:947px;width:36px;height:36px;background:#027b1d"></div>
<svg class="r" style="left:232px;top:947px" width="36" height="36" viewBox="0 0 36 36"><path d="M8.5 19 L15.5 25.5 L28 13" fill="none" stroke="#fff" stroke-width="5.2" stroke-linecap="round" stroke-linejoin="round"/></svg>
<div class="t" style="left:315.3px;top:954.3px;font-size:24.5px;color:#2a8a3e;">2</div>
<div class="t" style="left:361.3px;top:904.8px;font-size:24.5px;color:#333333;">Контрагент (упр.)</div>
<div class="t" style="left:361.3px;top:1012.8px;font-size:24.5px;color:#333333;">Контрагент (бух.)</div>
<div class="r" style="left:362px;top:938.5px;width:535px;height:59.0px;background:#fff;border:2px solid #e0e0e0"></div>
<div class="t" style="left:378.8px;top:957.3px;font-size:24.5px;color:#333333;">ИП Бербер</div>
<svg class="r" style="left:827px;top:959.0px" width="16" height="16" viewBox="0 0 16 16"><path d="M1.8 1.8 L14.2 14.2 M14.2 1.8 L1.8 14.2" stroke="#888" stroke-width="4"/></svg>
<svg class="r" style="left:865.5px;top:963.0px" width="13" height="10" viewBox="0 0 13 10"><path d="M0 0 H13 L6.5 10 Z" fill="#888"/></svg>
<div class="r" style="left:362px;top:1046.5px;width:535px;height:59.0px;background:#fff;border:2px solid #e0e0e0"></div>
<div class="t" style="left:378.8px;top:1065.3px;font-size:24.5px;color:#333333;">ИП Бербер</div>
<svg class="r" style="left:827px;top:1067.0px" width="16" height="16" viewBox="0 0 16 16"><path d="M1.8 1.8 L14.2 14.2 M14.2 1.8 L1.8 14.2" stroke="#888" stroke-width="4"/></svg>
<svg class="r" style="left:865.5px;top:1071.0px" width="13" height="10" viewBox="0 0 13 10"><path d="M0 0 H13 L6.5 10 Z" fill="#888"/></svg>
<svg class="r" style="left:909px;top:955.0px" width="26" height="26" viewBox="0 0 26 26"><path d="M14.4 6.1 L20.7 12.4 L7.8 24.9 H1.5 V18.5 Z" fill="#2a8a3e"/><path d="M15.9 4.6 L18.6 1.9 Q19.6 0.9 20.6 1.9 L24.6 5.9 Q25.6 6.9 24.6 7.9 L21.9 10.6 Z" fill="#2a8a3e"/><path d="M3.3 19.3 L4.4 18.4 L8.5 22.5 L7.5 23.4 L6.2 23.4 L5.6 22.4 L4.4 22.3 V21.1 L3.3 20.6 Z" fill="#fff"/><path d="M6.6 16.6 L15 8.4" stroke="rgba(255,255,255,0.45)" stroke-width="0.8"/></svg>
<svg class="r" style="left:954px;top:956.2px" width="26" height="26" viewBox="0 0 26 26"><path d="M2.9 13 H17" stroke="#2a8a3e" stroke-width="5.8" stroke-linecap="round"/><path d="M11.4 3.9 L20.4 12.9 L11.4 21.9" fill="none" stroke="#2a8a3e" stroke-width="5.8" stroke-linecap="round" stroke-linejoin="round"/></svg>
<svg class="r" style="left:909px;top:1063.0px" width="26" height="26" viewBox="0 0 26 26"><path d="M14.4 6.1 L20.7 12.4 L7.8 24.9 H1.5 V18.5 Z" fill="#2a8a3e"/><path d="M15.9 4.6 L18.6 1.9 Q19.6 0.9 20.6 1.9 L24.6 5.9 Q25.6 6.9 24.6 7.9 L21.9 10.6 Z" fill="#2a8a3e"/><path d="M3.3 19.3 L4.4 18.4 L8.5 22.5 L7.5 23.4 L6.2 23.4 L5.6 22.4 L4.4 22.3 V21.1 L3.3 20.6 Z" fill="#fff"/><path d="M6.6 16.6 L15 8.4" stroke="rgba(255,255,255,0.45)" stroke-width="0.8"/></svg>
<svg class="r" style="left:954px;top:1064.2px" width="26" height="26" viewBox="0 0 26 26"><path d="M2.9 13 H17" stroke="#2a8a3e" stroke-width="5.8" stroke-linecap="round"/><path d="M11.4 3.9 L20.4 12.9 L11.4 21.9" fill="none" stroke="#2a8a3e" stroke-width="5.8" stroke-linecap="round" stroke-linejoin="round"/></svg>
<div class="t" style="left:1004.0px;top:904.8px;font-size:24.5px;color:#333333;">Статья затрат</div>
<div class="t" style="left:1003.3px;top:1012.8px;font-size:24.5px;color:#333333;">Контрагент (ФК)</div>
<div class="r" style="left:1005px;top:938.5px;width:578px;height:59.0px;background:#fff;border:2px solid #e0e0e0"></div>
<div class="t" style="left:1021.8px;top:957.3px;font-size:24.5px;color:#333333;">3.1.1. Роуз (Бербер Зоя)</div>
<svg class="r" style="left:1513px;top:959.0px" width="16" height="16" viewBox="0 0 16 16"><path d="M1.8 1.8 L14.2 14.2 M14.2 1.8 L1.8 14.2" stroke="#888" stroke-width="4"/></svg>
<svg class="r" style="left:1551.5px;top:963.0px" width="13" height="10" viewBox="0 0 13 10"><path d="M0 0 H13 L6.5 10 Z" fill="#888"/></svg>
<svg class="r" style="left:1596px;top:956.2px" width="26" height="26" viewBox="0 0 26 26"><path d="M2.9 13 H17" stroke="#2a8a3e" stroke-width="5.8" stroke-linecap="round"/><path d="M11.4 3.9 L20.4 12.9 L11.4 21.9" fill="none" stroke="#2a8a3e" stroke-width="5.8" stroke-linecap="round" stroke-linejoin="round"/></svg>
<div class="r" style="left:1005px;top:1046.5px;width:621px;height:59.0px;background:#f3f3f3;border:2px solid #e0e0e0"></div>
<div class="t" style="left:1021.8px;top:1065.3px;font-size:24.5px;color:#333333;">ИП Бербер</div>
<svg class="r" style="left:1594.5px;top:1071.0px" width="13" height="10" viewBox="0 0 13 10"><path d="M0 0 H13 L6.5 10 Z" fill="#888"/></svg>
<div class="t" style="left:1646.1px;top:904.8px;font-size:24.5px;color:#333333;">Кол-во</div>
<div class="t" style="left:1747.0px;top:904.8px;font-size:24.5px;color:#333333;">Тип</div>
<div class="t" style="left:1942.8px;top:904.8px;font-size:24.5px;color:#333333;">Сумма</div>
<div class="t" style="left:2059.8px;top:904.8px;font-size:24.5px;color:#2a8a3e;">из плана</div>
<div class="t" style="left:2179.0px;top:904.8px;font-size:24.5px;color:#333333;">ФК %</div>
<div class="t" style="left:2291.0px;top:904.8px;font-size:24.5px;color:#333333;">ФК итого</div>
<div class="t" style="left:2492.9px;top:904.8px;font-size:24.5px;color:#333333;">Итого с ФК</div>
<div class="r" style="left:1647px;top:938.5px;width:80px;height:59.0px;background:#fff;border:2px solid #e0e0e0"></div>
<div class="t" style="left:1660.0px;top:955.8px;font-size:24.5px;color:#555555;">1</div>
<div class="r" style="left:1747px;top:938.5px;width:176px;height:59.0px;background:#fff;border:2px solid #e0e0e0"></div>
<div class="t" style="left:1763.8px;top:957.3px;font-size:24.5px;color:#333333;">Безнал.</div>
<svg class="r" style="left:1891.5px;top:963.0px" width="13" height="10" viewBox="0 0 13 10"><path d="M0 0 H13 L6.5 10 Z" fill="#888"/></svg>
<div class="r" style="left:1943px;top:938.5px;width:217px;height:59.0px;background:#fff;border:2px solid #e0e0e0"></div>
<div class="t" style="left:1956.0px;top:955.8px;font-size:24.5px;color:#555555;letter-spacing:-0.55px;">150 000,00</div>
<div class="r" style="left:2180px;top:938.5px;width:92px;height:59.0px;background:#fff;border:2px solid #e0e0e0"></div>
<div class="t" style="left:2193.0px;top:955.8px;font-size:24.5px;color:#555555;">7</div>
<div class="r" style="left:2292px;top:938.5px;width:182px;height:59.0px;background:#efefef;border:2px solid #e0e0e0"></div>
<div class="t" style="left:2305.0px;top:955.8px;font-size:24.5px;color:#555555;letter-spacing:-0.55px;">11 290,32</div>
<div class="r" style="left:2494px;top:938.5px;width:184px;height:59.0px;background:#efefef;border:2px solid #e0e0e0"></div>
<div class="t" style="left:2507.0px;top:955.8px;font-size:24.5px;color:#555555;letter-spacing:-0.55px;">161 290,32</div>
<svg class="r" style="left:2697px;top:951.7px" width="33" height="33" viewBox="0 0 33 33"><g fill="none" stroke="#000" stroke-width="2.1" stroke-linejoin="round" stroke-linecap="round"><path d="M10.6 2.05 H18.5 Q19.6 2.05 19.6 3.2 V9.6"/><path d="M12.9 23.7 H3.7 Q2.55 23.7 2.55 22.5 V10.6 L10.8 2.2 V9.7 Q10.8 10.8 9.7 10.8 H2.7"/><path d="M21.7 8.75 H29.4 Q30.5 8.75 30.5 9.9 V28.8 Q30.5 29.9 29.4 29.9 H14.2 Q13.1 29.9 13.1 28.8 V17.1 L21.6 8.9 V16 Q21.6 17.1 20.5 17.1 H13.2"/></g></svg>
<svg class="r" style="left:2744px;top:958.0px" width="21" height="21" viewBox="0 0 21 21"><path d="M3.4 3.4 L17.6 17.6 M17.6 3.4 L3.4 17.6" stroke="#dc4f56" stroke-width="5" stroke-linecap="round"/></svg>
<div class="t" style="left:1646.8px;top:1012.8px;font-size:24.5px;color:#333333;">Съемочная группа</div>
<div class="t" style="left:1942.1px;top:1012.8px;font-size:24.5px;color:#333333;">Примечание</div>
<div class="r" style="left:1647px;top:1046.5px;width:276px;height:59.0px;background:#fff;border:2px solid #e0e0e0"></div>
<div class="t" style="left:1663.8px;top:1065.3px;font-size:24.5px;color:#333333;letter-spacing:-0.5px;">Первая съемо…</div>
<svg class="r" style="left:1891.5px;top:1071.0px" width="13" height="10" viewBox="0 0 13 10"><path d="M0 0 H13 L6.5 10 Z" fill="#888"/></svg>
<div class="r" style="left:1943px;top:1046.5px;width:745px;height:59.0px;background:#fff;border:2px solid #e0e0e0"></div>
<div class="t" style="left:1956.0px;top:1063.8px;font-size:24.5px;color:#555555;letter-spacing:-0.45px;">Актер - Бербер Зоя - смена</div>
<svg class="r" style="left:2703px;top:1064.5px" width="28.8" height="25.8" viewBox="0 0 38 34" preserveAspectRatio="none"><path d="M36.9 12.8 L25.2 1.4 V8.05 H15 C7 8.05 1.2 12 1.2 21.5 C1.2 26 3 30.5 4.65 33 C4.2 25 7 17.6 15 17.6 H25.2 V24.2 Z" fill="#6d2563"/></svg>
<div class="r" style="left:210px;top:1121px;width:2570px;height:2px;background:#dcdcdc"></div>
<div class="r" style="left:210px;top:1123px;width:2570px;height:234px;background:#f4f4f4"></div>
<div class="r" style="left:290px;top:1121px;width:2px;height:236px;background:#dcdcdc"></div>
<div class="r" style="left:230px;top:1182px;width:40px;height:40px;background:#f3f0f2"></div>
<div class="r" style="left:232px;top:1184px;width:36px;height:36px;background:#027b1d"></div>
<svg class="r" style="left:232px;top:1184px" width="36" height="36" viewBox="0 0 36 36"><path d="M8.5 19 L15.5 25.5 L28 13" fill="none" stroke="#fff" stroke-width="5.2" stroke-linecap="round" stroke-linejoin="round"/></svg>
<div class="t" style="left:315.3px;top:1191.3px;font-size:24.5px;color:#2a8a3e;">3</div>
<div class="t" style="left:361.3px;top:1141.8px;font-size:24.5px;color:#333333;">Контрагент (упр.)</div>
<div class="t" style="left:361.3px;top:1249.8px;font-size:24.5px;color:#333333;">Контрагент (бух.)</div>
<div class="r" style="left:362px;top:1175.5px;width:535px;height:59.0px;background:#fff;border:2px solid #e0e0e0"></div>
<div class="t" style="left:378.8px;top:1194.3px;font-size:24.5px;color:#333333;">Кузнецов ИП</div>
<svg class="r" style="left:827px;top:1196.0px" width="16" height="16" viewBox="0 0 16 16"><path d="M1.8 1.8 L14.2 14.2 M14.2 1.8 L1.8 14.2" stroke="#888" stroke-width="4"/></svg>
<svg class="r" style="left:865.5px;top:1200.0px" width="13" height="10" viewBox="0 0 13 10"><path d="M0 0 H13 L6.5 10 Z" fill="#888"/></svg>
<div class="r" style="left:362px;top:1283.5px;width:535px;height:59.0px;background:#fff;border:2px solid #e0e0e0"></div>
<div class="t" style="left:378.8px;top:1302.3px;font-size:24.5px;color:#333333;">Кузнецов ИП</div>
<svg class="r" style="left:827px;top:1304.0px" width="16" height="16" viewBox="0 0 16 16"><path d="M1.8 1.8 L14.2 14.2 M14.2 1.8 L1.8 14.2" stroke="#888" stroke-width="4"/></svg>
<svg class="r" style="left:865.5px;top:1308.0px" width="13" height="10" viewBox="0 0 13 10"><path d="M0 0 H13 L6.5 10 Z" fill="#888"/></svg>
<svg class="r" style="left:909px;top:1192.0px" width="26" height="26" viewBox="0 0 26 26"><path d="M14.4 6.1 L20.7 12.4 L7.8 24.9 H1.5 V18.5 Z" fill="#2a8a3e"/><path d="M15.9 4.6 L18.6 1.9 Q19.6 0.9 20.6 1.9 L24.6 5.9 Q25.6 6.9 24.6 7.9 L21.9 10.6 Z" fill="#2a8a3e"/><path d="M3.3 19.3 L4.4 18.4 L8.5 22.5 L7.5 23.4 L6.2 23.4 L5.6 22.4 L4.4 22.3 V21.1 L3.3 20.6 Z" fill="#fff"/><path d="M6.6 16.6 L15 8.4" stroke="rgba(255,255,255,0.45)" stroke-width="0.8"/></svg>
<svg class="r" style="left:954px;top:1193.2px" width="26" height="26" viewBox="0 0 26 26"><path d="M2.9 13 H17" stroke="#2a8a3e" stroke-width="5.8" stroke-linecap="round"/><path d="M11.4 3.9 L20.4 12.9 L11.4 21.9" fill="none" stroke="#2a8a3e" stroke-width="5.8" stroke-linecap="round" stroke-linejoin="round"/></svg>
<svg class="r" style="left:909px;top:1300.0px" width="26" height="26" viewBox="0 0 26 26"><path d="M14.4 6.1 L20.7 12.4 L7.8 24.9 H1.5 V18.5 Z" fill="#2a8a3e"/><path d="M15.9 4.6 L18.6 1.9 Q19.6 0.9 20.6 1.9 L24.6 5.9 Q25.6 6.9 24.6 7.9 L21.9 10.6 Z" fill="#2a8a3e"/><path d="M3.3 19.3 L4.4 18.4 L8.5 22.5 L7.5 23.4 L6.2 23.4 L5.6 22.4 L4.4 22.3 V21.1 L3.3 20.6 Z" fill="#fff"/><path d="M6.6 16.6 L15 8.4" stroke="rgba(255,255,255,0.45)" stroke-width="0.8"/></svg>
<svg class="r" style="left:954px;top:1301.2px" width="26" height="26" viewBox="0 0 26 26"><path d="M2.9 13 H17" stroke="#2a8a3e" stroke-width="5.8" stroke-linecap="round"/><path d="M11.4 3.9 L20.4 12.9 L11.4 21.9" fill="none" stroke="#2a8a3e" stroke-width="5.8" stroke-linecap="round" stroke-linejoin="round"/></svg>
<div class="t" style="left:1004.0px;top:1141.8px;font-size:24.5px;color:#333333;">Статья затрат</div>
<div class="t" style="left:1003.3px;top:1249.8px;font-size:24.5px;color:#333333;">Контрагент (ФК)</div>
<div class="r" style="left:1005px;top:1175.5px;width:578px;height:59.0px;background:#fff;border:2px solid #e0e0e0"></div>
<div class="t" style="left:1021.8px;top:1194.3px;font-size:24.5px;color:#333333;">3.1.2. Джек (Кузнецов Александр)</div>
<svg class="r" style="left:1513px;top:1196.0px" width="16" height="16" viewBox="0 0 16 16"><path d="M1.8 1.8 L14.2 14.2 M14.2 1.8 L1.8 14.2" stroke="#888" stroke-width="4"/></svg>
<svg class="r" style="left:1551.5px;top:1200.0px" width="13" height="10" viewBox="0 0 13 10"><path d="M0 0 H13 L6.5 10 Z" fill="#888"/></svg>
<svg class="r" style="left:1596px;top:1193.2px" width="26" height="26" viewBox="0 0 26 26"><path d="M2.9 13 H17" stroke="#2a8a3e" stroke-width="5.8" stroke-linecap="round"/><path d="M11.4 3.9 L20.4 12.9 L11.4 21.9" fill="none" stroke="#2a8a3e" stroke-width="5.8" stroke-linecap="round" stroke-linejoin="round"/></svg>
<div class="r" style="left:1005px;top:1283.5px;width:621px;height:59.0px;background:#f3f3f3;border:2px solid #e0e0e0"></div>
<div class="t" style="left:1021.8px;top:1302.3px;font-size:24.5px;color:#333333;">Кузнецов ИП</div>
<svg class="r" style="left:1594.5px;top:1308.0px" width="13" height="10" viewBox="0 0 13 10"><path d="M0 0 H13 L6.5 10 Z" fill="#888"/></svg>
<div class="t" style="left:1646.1px;top:1141.8px;font-size:24.5px;color:#333333;">Кол-во</div>
<div class="t" style="left:1747.0px;top:1141.8px;font-size:24.5px;color:#333333;">Тип</div>
<div class="t" style="left:1942.8px;top:1141.8px;font-size:24.5px;color:#333333;">Сумма</div>
<div class="t" style="left:2059.8px;top:1141.8px;font-size:24.5px;color:#2a8a3e;">из плана</div>
<div class="t" style="left:2179.0px;top:1141.8px;font-size:24.5px;color:#333333;">ФК %</div>
<div class="t" style="left:2291.0px;top:1141.8px;font-size:24.5px;color:#333333;">ФК итого</div>
<div class="t" style="left:2492.9px;top:1141.8px;font-size:24.5px;color:#333333;">Итого с ФК</div>
<div class="r" style="left:1647px;top:1175.5px;width:80px;height:59.0px;background:#fff;border:2px solid #e0e0e0"></div>
<div class="t" style="left:1660.0px;top:1192.8px;font-size:24.5px;color:#555555;">1</div>
<div class="r" style="left:1747px;top:1175.5px;width:176px;height:59.0px;background:#fff;border:2px solid #e0e0e0"></div>
<div class="t" style="left:1763.8px;top:1194.3px;font-size:24.5px;color:#333333;">Безнал.</div>
<svg class="r" style="left:1891.5px;top:1200.0px" width="13" height="10" viewBox="0 0 13 10"><path d="M0 0 H13 L6.5 10 Z" fill="#888"/></svg>
<div class="r" style="left:1943px;top:1175.5px;width:217px;height:59.0px;background:#fff;border:2px solid #e0e0e0"></div>
<div class="t" style="left:1956.0px;top:1192.8px;font-size:24.5px;color:#555555;letter-spacing:-0.55px;">170 000,00</div>
<div class="r" style="left:2180px;top:1175.5px;width:92px;height:59.0px;background:#fff;border:2px solid #e0e0e0"></div>
<div class="t" style="left:2193.0px;top:1192.8px;font-size:24.5px;color:#555555;">7</div>
<div class="r" style="left:2292px;top:1175.5px;width:182px;height:59.0px;background:#efefef;border:2px solid #e0e0e0"></div>
<div class="t" style="left:2305.0px;top:1192.8px;font-size:24.5px;color:#555555;letter-spacing:-0.55px;">12 795,70</div>
<div class="r" style="left:2494px;top:1175.5px;width:184px;height:59.0px;background:#efefef;border:2px solid #e0e0e0"></div>
<div class="t" style="left:2507.0px;top:1192.8px;font-size:24.5px;color:#555555;letter-spacing:-0.55px;">182 795,70</div>
<svg class="r" style="left:2697px;top:1188.7px" width="33" height="33" viewBox="0 0 33 33"><g fill="none" stroke="#000" stroke-width="2.1" stroke-linejoin="round" stroke-linecap="round"><path d="M10.6 2.05 H18.5 Q19.6 2.05 19.6 3.2 V9.6"/><path d="M12.9 23.7 H3.7 Q2.55 23.7 2.55 22.5 V10.6 L10.8 2.2 V9.7 Q10.8 10.8 9.7 10.8 H2.7"/><path d="M21.7 8.75 H29.4 Q30.5 8.75 30.5 9.9 V28.8 Q30.5 29.9 29.4 29.9 H14.2 Q13.1 29.9 13.1 28.8 V17.1 L21.6 8.9 V16 Q21.6 17.1 20.5 17.1 H13.2"/></g></svg>
<svg class="r" style="left:2744px;top:1195.0px" width="21" height="21" viewBox="0 0 21 21"><path d="M3.4 3.4 L17.6 17.6 M17.6 3.4 L3.4 17.6" stroke="#dc4f56" stroke-width="5" stroke-linecap="round"/></svg>
<div class="t" style="left:1646.8px;top:1249.8px;font-size:24.5px;color:#333333;">Съемочная группа</div>
<div class="t" style="left:1942.1px;top:1249.8px;font-size:24.5px;color:#333333;">Примечание</div>
<div class="r" style="left:1647px;top:1283.5px;width:276px;height:59.0px;background:#fff;border:2px solid #e0e0e0"></div>
<div class="t" style="left:1663.8px;top:1302.3px;font-size:24.5px;color:#333333;letter-spacing:-0.5px;">Первая съемо…</div>
<svg class="r" style="left:1891.5px;top:1308.0px" width="13" height="10" viewBox="0 0 13 10"><path d="M0 0 H13 L6.5 10 Z" fill="#888"/></svg>
<div class="r" style="left:1943px;top:1283.5px;width:745px;height:59.0px;background:#fff;border:2px solid #e0e0e0"></div>
<div class="t" style="left:1956.0px;top:1300.8px;font-size:24.5px;color:#555555;letter-spacing:-0.15px;">Актер - Кузнецов Александр - смена</div>
<svg class="r" style="left:2703px;top:1301.5px" width="28.8" height="25.8" viewBox="0 0 38 34" preserveAspectRatio="none"><path d="M36.9 12.8 L25.2 1.4 V8.05 H15 C7 8.05 1.2 12 1.2 21.5 C1.2 26 3 30.5 4.65 33 C4.2 25 7 17.6 15 17.6 H25.2 V24.2 Z" fill="#6d2563"/></svg>
<div class="r" style="left:210px;top:1357px;width:2570px;height:2px;background:#dcdcdc"></div>
<div class="r" style="left:210px;top:1359px;width:2570px;height:72px;background:#cccccc"></div>
<div class="r" style="left:210px;top:1431px;width:2570px;height:2px;background:#dcdcdc"></div>
<div class="r" style="left:290px;top:1358px;width:2px;height:74px;background:#dcdcdc"></div>
<div class="r" style="left:230px;top:1375px;width:40px;height:40px;background:#f3f0f2"></div>
<div class="r" style="left:232px;top:1377px;width:36px;height:36px;background:#027b1d"></div>
<svg class="r" style="left:232px;top:1377px" width="36" height="36" viewBox="0 0 36 36"><path d="M8.5 19 L15.5 25.5 L28 13" fill="none" stroke="#fff" stroke-width="5.2" stroke-linecap="round" stroke-linejoin="round"/></svg>
<div class="t" style="left:301.5px;top:1383.3px;font-size:24.5px;color:#333333;">6. Аренда специализированного транспорта</div>
<div class="t" style="left:1646.3px;top:1383.3px;font-size:24.5px;color:#333333;">2</div>
<div class="t" style="left:1942.2px;top:1383.3px;font-size:24.5px;color:#333333;letter-spacing:-0.55px;">60 000,00</div>
<div class="t" style="left:2290.4px;top:1383.3px;font-size:24.5px;color:#333333;letter-spacing:-0.55px;">5 217,39</div>
<div class="t" style="left:2493.6px;top:1383.3px;font-size:24.5px;color:#333333;letter-spacing:-0.55px;">65 217,39</div>
<div class="r" style="left:2456px;top:389px;width:324px;height:158px;background:#fff;box-shadow:0 6px 12px rgba(0,0,0,0.175);border:1px solid rgba(0,0,0,0.08)"></div>
<div class="r" style="left:2458px;top:389px;width:320px;height:52px;background:#288a3d"></div>
<div class="t" style="left:2491.1px;top:401.6px;font-size:26.5px;color:#fff;">Копировать на дату</div>
<div class="t" style="left:2491.1px;top:453.6px;font-size:26.5px;color:#2a8a3e;letter-spacing:-0.3px;">Перенести на дату</div>
<div class="t" style="left:2492.5px;top:505.6px;font-size:26.5px;color:#2a8a3e;">Удалить</div>
<svg class="r" style="left:0;top:0" width="2847" height="1451" viewBox="0 0 2847 1451"><g fill="#e32322"><polygon points="178.3,292.3 186.5,303.6 172.8,347.6 126.5,346.7 119.2,335.9 164.7,336.6"/><polygon points="194.9,315.2 210.7,337 197.3,381.6 150.5,380.7 134.7,358.3 180.9,359.2"/><polygon points="219.7,349.9 250.8,393.7 237.2,437.7 191.3,436.9 159.8,393 205.9,393.9"/><polygon points="2322.4,376.3 2336,376.3 2363.6,412.9 2336.6,450.3 2323.4,450.3 2350,412.9"/><polygon points="2350.6,376.3 2378.3,376.3 2405.7,412.9 2378.7,450.3 2351,450.3 2377.8,412.9"/><polygon points="2392.9,376.3 2446.9,376.3 2474.2,412.9 2447.4,450.3 2393.3,450.3 2420.1,412.9"/></g></svg>
</body></html>
